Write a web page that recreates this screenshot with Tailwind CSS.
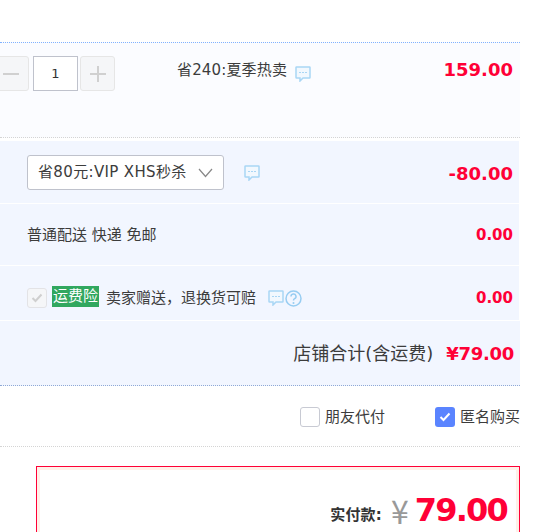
<!DOCTYPE html>
<html lang="zh">
<head>
  <meta charset="UTF-8">
  <title>Order summary</title>
  <script src="https://cdn.jsdelivr.net/npm/@tailwindcss/browser@4"></script>
</head>
<body class="bg-white text-[#3c3c3c] text-[15px] font-['DejaVu_Sans','Noto_Sans_CJK_SC',sans-serif]">
  <div class="h-[532px] overflow-hidden">
  <div class="w-[520px] pt-[42px]">

    <!-- product row -->
    <div class="h-[96px] bg-[#fbfcff] border-y border-dotted border-t-[#80b2ff] border-b-[#d4d4d4] flex">
      <div class="flex items-start gap-[2px] -ml-[7px] mt-[13px] w-[184px] shrink-0">
        <div class="w-[36px] h-[35px] border border-[#e6e6e6] rounded-[3px] bg-[#f5f6f8] flex items-center justify-center">
          <svg width="16" height="16" viewBox="0 0 16 16"><path d="M0 8h16" stroke="#d0d0d0" stroke-width="2"/></svg>
        </div>
        <div class="w-[45px] h-[35px] ml-[2px] border border-[#bfc2cc] bg-white flex items-center justify-center text-[13px] text-[#333]">1</div>
        <div class="w-[35px] h-[35px] border border-[#e6e6e6] rounded-[3px] bg-[#f5f6f8] flex items-center justify-center">
          <svg width="16" height="16" viewBox="0 0 16 16"><path d="M0 8h16M8 0v16" stroke="#d0d0d0" stroke-width="2"/></svg>
        </div>
      </div>
      <div class="mt-[17px] flex items-start h-[24px]">
        <span class="leading-[20px] tracking-[0.15px] whitespace-nowrap">省240:夏季热卖</span>
        <svg class="ml-[8px] mt-[6px]" width="16" height="16" viewBox="0 0 16 16"><path d="M1.5 1h13a.5.5 0 0 1 .5.5v10a.5.5 0 0 1-.5.5H8l-3 3v-3H1.5a.5.5 0 0 1-.5-.5v-10a.5.5 0 0 1 .5-.5z" fill="#f2f8fe" stroke="#a9d6f5" stroke-width="1.5"/><path d="M4 6.5h2M7 6.5h2M10 6.5h2" stroke="#a9d6f5"/></svg>
      </div>
      <div class="ml-auto pr-[7px] pt-[15px] text-[#ff0036] font-bold text-[18px] leading-[24px]">159.00</div>
    </div>

    <div class="h-[3px]"></div>

    <div class="bg-[#f2f6ff] w-[519px]">
      <!-- promo select -->
      <div class="h-[62px] flex items-center pl-[27px] pr-[6px] pt-[1px]">
        <div class="w-[197px] h-[35px] border border-[#bfc2cc] rounded-[3px] bg-white flex items-center pl-[10px] pr-[10px]">
          <span class="whitespace-nowrap tracking-[0.35px]">省80元:VIP XHS秒杀</span>
          <svg class="ml-auto" width="15" height="10" viewBox="0 0 15 10"><path d="M1 1l6.5 7.5L14 1" fill="none" stroke="#888" stroke-width="1.2"/></svg>
        </div>
        <svg class="ml-[20px]" width="16" height="16" viewBox="0 0 16 16"><path d="M1.5 1h13a.5.5 0 0 1 .5.5v10a.5.5 0 0 1-.5.5H8l-3 3v-3H1.5a.5.5 0 0 1-.5-.5v-10a.5.5 0 0 1 .5-.5z" fill="#f2f8fe" stroke="#a9d6f5" stroke-width="1.5"/><path d="M4 6.5h2M7 6.5h2M10 6.5h2" stroke="#a9d6f5"/></svg>
        <span class="ml-auto mt-[1px] text-[#ff0036] font-bold text-[18px]">-80.00</span>
      </div>
      <div class="h-px bg-white"></div>

      <!-- shipping -->
      <div class="h-[61px] flex items-center pl-[27px] pr-[6px]">
        <span class="mt-[1px]">普通配送 快递 免邮</span>
        <span class="ml-auto mt-[2px] text-[#ff0036] font-bold text-[15px]">0.00</span>
      </div>
      <div class="h-px bg-white"></div>

      <!-- freight insurance -->
      <div class="h-[54px] flex items-center pl-[27px] pr-[6px] pt-[10px]">
        <div class="w-[20px] h-[20px] border border-[#e3e3e6] rounded-[3px] bg-[#f5f6f8] flex items-center justify-center">
          <svg width="12" height="10" viewBox="0 0 12 10"><path d="M1.5 5l3 3 6-6.5" fill="none" stroke="#cfcfcf" stroke-width="2"/></svg>
        </div>
        <span class="ml-[5px] -mt-[3px] w-[47px] h-[21px] bg-[#31a75f] text-white text-[15px] leading-[21px] text-center whitespace-nowrap">运费险</span>
        <span class="ml-[7px] mt-[1px] whitespace-nowrap">卖家赠送，退换货可赔</span>
        <svg class="ml-[12px]" width="16" height="16" viewBox="0 0 16 16"><path d="M1.5 1h13a.5.5 0 0 1 .5.5v10a.5.5 0 0 1-.5.5H8l-3 3v-3H1.5a.5.5 0 0 1-.5-.5v-10a.5.5 0 0 1 .5-.5z" fill="#f2f8fe" stroke="#a9d6f5" stroke-width="1.5"/><path d="M4 6.5h2M7 6.5h2M10 6.5h2" stroke="#a9d6f5"/></svg>
        <svg class="ml-[1px]" width="17" height="17" viewBox="0 0 17 17"><circle cx="8.5" cy="8.5" r="7.5" fill="none" stroke="#98cdf2" stroke-width="1.5"/><path d="M6 6.5a2.5 2.5 0 1 1 3.6 2.2c-.8.4-1.1.9-1.1 1.8" fill="none" stroke="#98cdf2" stroke-width="1.5"/><circle cx="8.5" cy="13" r="1" fill="#98cdf2"/></svg>
        <span class="ml-auto mt-[1px] text-[#ff0036] font-bold text-[15px]">0.00</span>
      </div>
      <div class="h-px bg-white"></div>
    </div>

    <!-- shop total -->
    <div class="h-[65px] bg-[#f2f6ff] border-b border-dotted border-b-[#8fa9d6] flex items-center justify-end pr-[6px]">
      <span class="text-[18px] whitespace-nowrap">店铺合计(含运费)</span>
      <span class="ml-[13px] text-[#ff0036] font-bold text-[18px] tracking-[-0.3px]">¥79.00</span>
    </div>

    <!-- options -->
    <div class="h-[61px] border-b border-dotted border-b-[#d4d4d4] flex items-center pl-[300px] pt-[1px] overflow-hidden">
      <div class="w-[20px] h-[20px] border border-[#c8cad3] rounded-[3px] bg-white shrink-0"></div>
      <span class="ml-[5px] mt-[1px] whitespace-nowrap">朋友代付</span>
      <div class="ml-[50px] w-[20px] h-[20px] rounded-[3px] bg-[#5a84ff] flex items-center justify-center shrink-0">
        <svg width="12" height="10" viewBox="0 0 12 10"><path d="M1.5 5l3 3 6-6.5" fill="none" stroke="#fff" stroke-width="2"/></svg>
      </div>
      <span class="ml-[5px] mt-[1px] whitespace-nowrap">匿名购买</span>
    </div>

    <!-- amount payable -->
    <div class="mt-[19px] ml-[36px] w-[484px] h-[100px] border border-[#ff0036]">
      <div class="h-full border-[3px] border-[#fff0e8] flex items-start justify-end pr-[9px] pt-[20px]">
        <span class="mt-[14px] font-bold text-[#333] whitespace-nowrap tracking-[0.2px]">实付款:</span>
        <span class="ml-[9px] -mt-[2px] text-[32px] leading-[44px] text-[#999] font-['Noto_Sans_CJK_SC',sans-serif]">¥</span>
        <span class="ml-[6px] text-[32px] leading-[44px] -mt-[2px] font-bold text-[#ff0036] tracking-[-1.8px]">79.00</span>
      </div>
    </div>
  </div>
  </div>
</body>
</html>
